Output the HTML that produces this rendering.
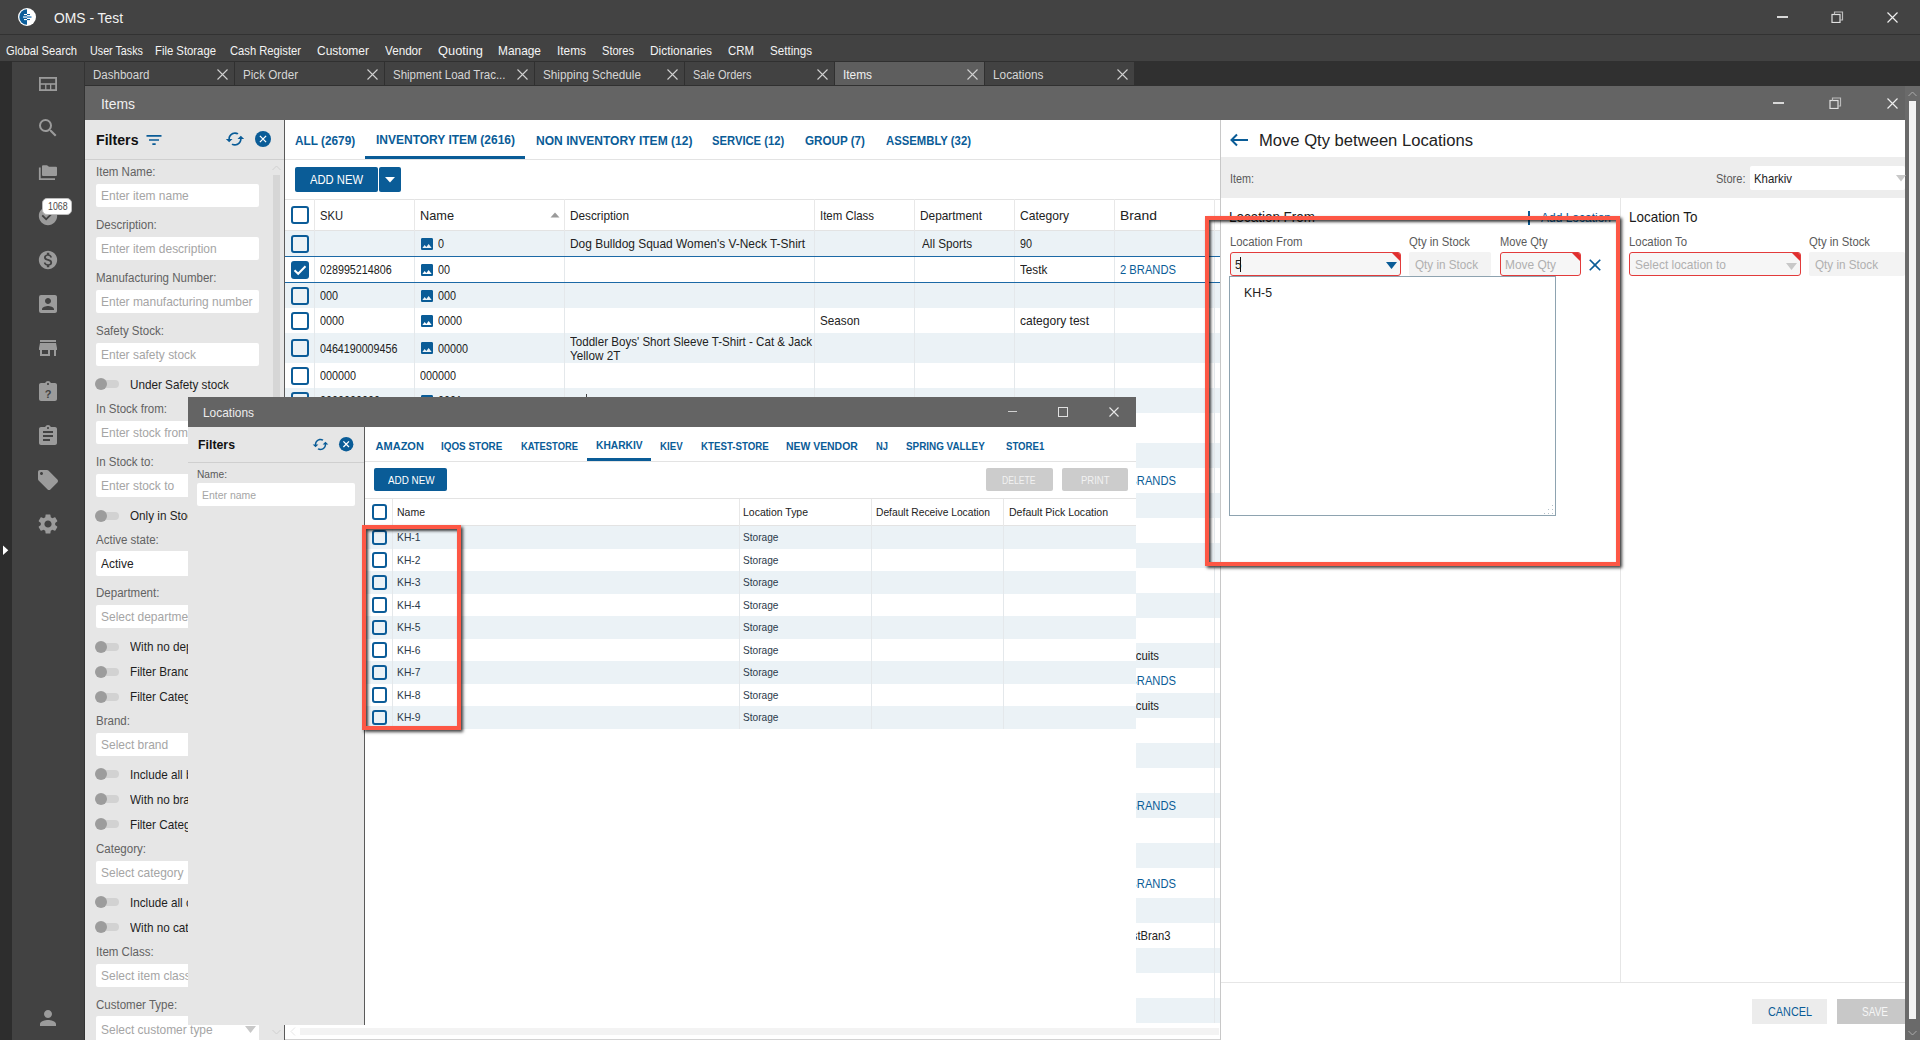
<!DOCTYPE html><html><head><meta charset="utf-8"><style>html,body{margin:0;padding:0;width:1920px;height:1040px;overflow:hidden;background:#303030;font-family:"Liberation Sans",sans-serif}.t{position:absolute;white-space:nowrap;transform-origin:0 0}.r{position:absolute;display:block}</style></head><body>
<div class="r" style="left:0px;top:0px;width:1920px;height:34px;background:#434343;"></div>
<div class="r" style="left:0px;top:34px;width:1920px;height:1px;background:#323232;"></div>
<div class="r" style="left:0px;top:35px;width:1920px;height:26px;background:#424242;"></div>
<svg class="r" style="left:18px;top:8px" width="18" height="18" viewBox="0 0 18 18"><circle cx="9" cy="9" r="9" fill="#fff"/><path d="M9 1.3 A7.7 7.7 0 0 0 9 16.7 Z" fill="#0b5e9b"/><rect x="6" y="6" width="3" height="1.1" fill="#fff"/><rect x="9" y="6" width="3" height="1.1" fill="#0b5e9b"/><rect x="5" y="8.3" width="4" height="1.5" fill="#c5dcee"/><rect x="9" y="8.3" width="4.5" height="1.5" fill="#3a86c2"/><rect x="6" y="11" width="3" height="1.1" fill="#fff"/><rect x="9" y="11" width="3" height="1.1" fill="#0b5e9b"/></svg>
<div class="t" style="left:54.00px;top:10.73px;font-size:14.5px;line-height:14.5px;color:#f2f2f2;transform:scaleX(0.955);">OMS - Test</div>
<div class="r" style="left:1777px;top:16px;width:11px;height:1.5px;background:#d8d8d8;"></div>
<svg class="r" style="left:1831px;top:11px" width="13" height="12" viewBox="0 0 13 12"><rect x="1" y="3.5" width="8" height="8" fill="none" stroke="#e0e0e0" stroke-width="1.2"/><path d="M3.5 3.5V1h8v8H9" fill="none" stroke="#bbb" stroke-width="1.2"/></svg>
<svg class="r" style="left:1887px;top:12px" width="11" height="11" viewBox="0 0 11 11"><path d="M0.5 0.5L10.5 10.5M10.5 0.5L0.5 10.5" stroke="#eee" stroke-width="1.2"/></svg>
<div class="t" style="left:6.00px;top:44.00px;font-size:13px;line-height:13px;color:#f4f4f4;transform:scaleX(0.862);">Global Search</div>
<div class="t" style="left:90.00px;top:44.00px;font-size:13px;line-height:13px;color:#f4f4f4;transform:scaleX(0.827);">User Tasks</div>
<div class="t" style="left:155.00px;top:44.00px;font-size:13px;line-height:13px;color:#f4f4f4;transform:scaleX(0.870);">File Storage</div>
<div class="t" style="left:230.00px;top:44.00px;font-size:13px;line-height:13px;color:#f4f4f4;transform:scaleX(0.862);">Cash Register</div>
<div class="t" style="left:317.00px;top:44.00px;font-size:13px;line-height:13px;color:#f4f4f4;transform:scaleX(0.923);">Customer</div>
<div class="t" style="left:385.00px;top:44.00px;font-size:13px;line-height:13px;color:#f4f4f4;transform:scaleX(0.898);">Vendor</div>
<div class="t" style="left:438.00px;top:44.00px;font-size:13px;line-height:13px;color:#f4f4f4;transform:scaleX(0.988);">Quoting</div>
<div class="t" style="left:498.00px;top:44.00px;font-size:13px;line-height:13px;color:#f4f4f4;transform:scaleX(0.915);">Manage</div>
<div class="t" style="left:557.00px;top:44.00px;font-size:13px;line-height:13px;color:#f4f4f4;transform:scaleX(0.912);">Items</div>
<div class="t" style="left:602.00px;top:44.00px;font-size:13px;line-height:13px;color:#f4f4f4;transform:scaleX(0.852);">Stores</div>
<div class="t" style="left:650.00px;top:44.00px;font-size:13px;line-height:13px;color:#f4f4f4;transform:scaleX(0.913);">Dictionaries</div>
<div class="t" style="left:728.00px;top:44.00px;font-size:13px;line-height:13px;color:#f4f4f4;transform:scaleX(0.878);">CRM</div>
<div class="t" style="left:770.00px;top:44.00px;font-size:13px;line-height:13px;color:#f4f4f4;transform:scaleX(0.894);">Settings</div>
<div class="r" style="left:84px;top:61px;width:1836px;height:25px;background:#303030;"></div>
<div class="r" style="left:85px;top:62px;width:149px;height:23px;background:#424242;"></div>
<div class="t" style="left:93.00px;top:69.12px;font-size:12.5px;line-height:12.5px;color:#d6d6d6;transform:scaleX(0.922);">Dashboard</div>
<svg class="r" style="left:217px;top:69px" width="11" height="11" viewBox="0 0 11 11"><path d="M0.5 0.5L10.5 10.5M10.5 0.5L0.5 10.5" stroke="#d0d0d0" stroke-width="1.1"/></svg>
<div class="r" style="left:235px;top:62px;width:149px;height:23px;background:#424242;"></div>
<div class="t" style="left:243.00px;top:69.12px;font-size:12.5px;line-height:12.5px;color:#d6d6d6;transform:scaleX(0.932);">Pick Order</div>
<svg class="r" style="left:367px;top:69px" width="11" height="11" viewBox="0 0 11 11"><path d="M0.5 0.5L10.5 10.5M10.5 0.5L0.5 10.5" stroke="#d0d0d0" stroke-width="1.1"/></svg>
<div class="r" style="left:385px;top:62px;width:149px;height:23px;background:#424242;"></div>
<div class="t" style="left:393.00px;top:69.12px;font-size:12.5px;line-height:12.5px;color:#d6d6d6;transform:scaleX(0.920);">Shipment Load Trac...</div>
<svg class="r" style="left:517px;top:69px" width="11" height="11" viewBox="0 0 11 11"><path d="M0.5 0.5L10.5 10.5M10.5 0.5L0.5 10.5" stroke="#d0d0d0" stroke-width="1.1"/></svg>
<div class="r" style="left:535px;top:62px;width:149px;height:23px;background:#424242;"></div>
<div class="t" style="left:543.00px;top:69.12px;font-size:12.5px;line-height:12.5px;color:#d6d6d6;transform:scaleX(0.940);">Shipping Schedule</div>
<svg class="r" style="left:667px;top:69px" width="11" height="11" viewBox="0 0 11 11"><path d="M0.5 0.5L10.5 10.5M10.5 0.5L0.5 10.5" stroke="#d0d0d0" stroke-width="1.1"/></svg>
<div class="r" style="left:685px;top:62px;width:149px;height:23px;background:#424242;"></div>
<div class="t" style="left:693.00px;top:69.12px;font-size:12.5px;line-height:12.5px;color:#d6d6d6;transform:scaleX(0.877);">Sale Orders</div>
<svg class="r" style="left:817px;top:69px" width="11" height="11" viewBox="0 0 11 11"><path d="M0.5 0.5L10.5 10.5M10.5 0.5L0.5 10.5" stroke="#d0d0d0" stroke-width="1.1"/></svg>
<div class="r" style="left:835px;top:62px;width:149px;height:23px;background:#5e5e5e;"></div>
<div class="t" style="left:843.00px;top:69.12px;font-size:12.5px;line-height:12.5px;color:#f0f0f0;transform:scaleX(0.949);">Items</div>
<svg class="r" style="left:967px;top:69px" width="11" height="11" viewBox="0 0 11 11"><path d="M0.5 0.5L10.5 10.5M10.5 0.5L0.5 10.5" stroke="#d0d0d0" stroke-width="1.1"/></svg>
<div class="r" style="left:985px;top:62px;width:149px;height:23px;background:#424242;"></div>
<div class="t" style="left:993.00px;top:69.12px;font-size:12.5px;line-height:12.5px;color:#d6d6d6;transform:scaleX(0.944);">Locations</div>
<svg class="r" style="left:1117px;top:69px" width="11" height="11" viewBox="0 0 11 11"><path d="M0.5 0.5L10.5 10.5M10.5 0.5L0.5 10.5" stroke="#d0d0d0" stroke-width="1.1"/></svg>
<div class="r" style="left:0px;top:61px;width:12px;height:979px;background:#2d2d2d;"></div>
<svg class="r" style="left:2px;top:545px" width="7" height="11" viewBox="0 0 7 11"><path d="M1 0.5L6.3 5.2L1 10Z" fill="#fff"/></svg>
<div class="r" style="left:12px;top:62px;width:72px;height:978px;background:#424242;"></div>
<div class="r" style="left:12px;top:61px;width:73px;height:1px;background:#303030;"></div>
<div class="r" style="left:84px;top:61px;width:1px;height:979px;background:#333333;"></div>
<svg class="r" style="left:39px;top:77px" width="18" height="14" viewBox="0 0 18 14"><rect x="0.9" y="0.9" width="16.2" height="12.2" fill="none" stroke="#9b9b9b" stroke-width="1.8"/><rect x="0" y="6.2" width="18" height="1.6" fill="#9b9b9b"/><rect x="6.1" y="7" width="1.3" height="6" fill="#9b9b9b"/><rect x="11" y="7" width="1.3" height="6" fill="#9b9b9b"/></svg>
<svg class="r" style="left:36px;top:116px;" width="24" height="24" viewBox="0 0 24 24"><path fill="#9b9b9b" d="M15.5 14h-.79l-.28-.27A6.471 6.471 0 0 0 16 9.5 6.5 6.5 0 1 0 9.5 16c1.61 0 3.09-.59 4.23-1.57l.27.28v.79l5 4.99L20.49 19l-4.99-5zm-6 0C7.01 14 5 11.99 5 9.5S7.01 5 9.5 5 14 7.01 14 9.5 11.99 14 9.5 14z"/></svg>
<svg class="r" style="left:38px;top:165px" width="20" height="16" viewBox="0 0 20 16"><path d="M5 0.2h4l2 1.6h7a1 1 0 0 1 1 1v7.2a1 1 0 0 1-1 1h-13a1 1 0 0 1-1-1v-8.8a1 1 0 0 1 1-1z" fill="#9b9b9b"/><path d="M1.8 2.5v11.7h15.2" fill="none" stroke="#9b9b9b" stroke-width="1.8"/></svg>
<svg class="r" style="left:37px;top:205px;" width="22" height="22" viewBox="0 0 24 24"><path fill="#9b9b9b" d="M12 2C6.48 2 2 6.48 2 12s4.48 10 10 10 10-4.48 10-10S17.52 2 12 2zm-2 15l-5-5 1.41-1.41L10 14.17l7.59-7.59L19 8l-9 9z"/></svg>
<svg class="r" style="left:37px;top:249px;" width="22" height="22" viewBox="0 0 24 24"><path fill="#9b9b9b" d="M12 2C6.48 2 2 6.48 2 12s4.48 10 10 10 10-4.48 10-10S17.52 2 12 2zm1.41 16.09V20h-2.67v-1.93c-1.71-.36-3.16-1.46-3.27-3.4h1.96c.1 1.05.82 1.870 2.65 1.87 1.96 0 2.4-.98 2.4-1.59 0-.83-.44-1.61-2.670-2.14-2.48-.6-4.18-1.62-4.18-3.67 0-1.72 1.39-2.84 3.11-3.21V4h2.67v1.95c1.86.45 2.79 1.86 2.85 3.39H14.3c-.05-1.11-.64-1.87-2.22-1.87-1.5 0-2.4.68-2.4 1.64 0 .84.65 1.39 2.67 1.91s4.18 1.39 4.18 3.91c-.01 1.83-1.38 2.83-3.12 3.16z"/></svg>
<svg class="r" style="left:36px;top:292px;" width="24" height="24" viewBox="0 0 24 24"><path fill="#9b9b9b" d="M3 5v14a2 2 0 0 0 2 2h14c1.1 0 2-.9 2-2V5c0-1.1-.9-2-2-2H5a2 2 0 0 0-2 2zm12 4c0 1.66-1.34 3-3 3s-3-1.340-3-3 1.34-3 3-3 3 1.34 3 3zm-9 8c0-2 4-3.1 6-3.1s6 1.1 6 3.1v1H6v-1z"/></svg>
<svg class="r" style="left:36px;top:336px;" width="24" height="24" viewBox="0 0 24 24"><path fill="#9b9b9b" d="M20 4H4v2h16V4zm1 10v-2l-1-5H4l-1 5v2h1v6h10v-6h4v6h2v-6h1zm-9 4H6v-4h6v4z"/></svg>
<svg class="r" style="left:36px;top:380px" width="24" height="24" viewBox="0 0 24 24"><path fill="#9b9b9b" d="M19 3h-4.18C14.4 1.84 13.3 1 12 1c-1.3 0-2.4.84-2.82 2H5c-1.1 0-2 .9-2 2v14c0 1.1.9 2 2 2h14c1.1 0 2-.9 2-2V5c0-1.1-.9-2-2-2zm-7 0c.55 0 1 .45 1 1s-.45 1-1 1-1-.45-1-1 .45-1 1-1z"/><text x="12" y="17.5" text-anchor="middle" font-family="Liberation Sans" font-weight="bold" font-size="11" fill="#424242">?</text></svg>
<svg class="r" style="left:36px;top:424px;" width="24" height="24" viewBox="0 0 24 24"><path fill="#9b9b9b" d="M19 3h-4.18C14.4 1.84 13.3 1 12 1c-1.3 0-2.4.84-2.82 2H5c-1.1 0-2 .9-2 2v14c0 1.1.9 2 2 2h14c1.1 0 2-.9 2-2V5c0-1.1-.9-2-2-2zm-7 0c.55 0 1 .45 1 1s-.45 1-1 1-1-.45-1-1 .45-1 1-1zm2 14H7v-2h7v2zm3-4H7v-2h10v2zm0-4H7V7h10v2z"/></svg>
<svg class="r" style="left:36px;top:468px;" width="24" height="24" viewBox="0 0 24 24"><path fill="#9b9b9b" d="M21.41 11.58l-9-9C12.05 2.22 11.550 2 11 2H4c-1.1 0-2 .9-2 2v7c0 .55.22 1.05.59 1.42l9 9c.36.36.86.58 1.41.58.55 0 1.05-.22 1.41-.59l7-7c.37-.36.59-.86.59-1.41 0-.55-.23-1.06-.59-1.42zM5.5 7C4.67 7 4 6.33 4 5.5S4.67 4 5.5 4 7 4.67 7 5.5 6.33 7 5.5 7z"/></svg>
<svg class="r" style="left:36px;top:512px;" width="24" height="24" viewBox="0 0 24 24"><path fill="#9b9b9b" d="M19.14 12.94c.04-.3.06-.61.06-.94 0-.32-.02-.64-.07-.94l2.03-1.58a.49.49 0 0 0 .12-.61l-1.92-3.32a.488.488 0 0 0-.59-.22l-2.39.96c-.5-.38-1.03-.7-1.62-.94l-.36-2.54a.484.484 0 0 0-.48-.41h-3.84c-.24 0-.43.17-.47.41l-.36 2.54c-.59.24-1.13.57-1.62.94l-2.39-.96c-.22-.08-.47 0-.59.22L2.74 8.87c-.12.21-.08.47.12.61l2.03 1.58c-.05.3-.09.63-.09.94s.02.64.07.94l-2.03 1.58a.49.49 0 0 0-.12.61l1.92 3.32c.12.22.37.29.59.22l2.39-.96c.5.38 1.030.7 1.62.94l.36 2.54c.05.24.24.41.48.41h3.84c.24 0 .44-.17.47-.41l.36-2.54c.59-.24 1.13-.56 1.62-.94l2.39.96c.22.08.47 0 .59-.22l1.92-3.32c.12-.22.07-.47-.12-.61l-2.01-1.58zM12 15.6c-1.98 0-3.6-1.62-3.6-3.6s1.62-3.6 3.6-3.6 3.6 1.62 3.6 3.6-1.62 3.6-3.6 3.6z"/></svg>
<svg class="r" style="left:36px;top:1006px;" width="24" height="24" viewBox="0 0 24 24"><path fill="#9b9b9b" d="M12 12c2.21 0 4-1.79 4-4s-1.79-4-4-4-4 1.79-4 4 1.79 4 4 4zm0 2c-2.67 0-8 1.34-8 4v2h16v-2c0-2.66-5.33-4-8-4z"/></svg>
<div class="r" style="left:42px;top:198px;width:28px;height:15px;background:#fff;border:1px solid #bbb;border-radius:5px"></div>
<div class="t" style="left:47.50px;top:201.53px;font-size:10px;line-height:10px;color:#4a4a4a;transform:scaleX(0.877);">1068</div>
<div class="r" style="left:85px;top:86px;width:1820px;height:34px;background:#646464;"></div>
<div class="t" style="left:101.00px;top:96.65px;font-size:14px;line-height:14px;color:#f0f0f0;transform:scaleX(0.993);">Items</div>
<div class="r" style="left:1773px;top:102px;width:11px;height:1.5px;background:#d8d8d8;"></div>
<svg class="r" style="left:1829px;top:97px" width="13" height="12" viewBox="0 0 13 12"><rect x="1" y="3.5" width="8" height="8" fill="none" stroke="#e0e0e0" stroke-width="1.2"/><path d="M3.5 3.5V1h8v8H9" fill="none" stroke="#bbb" stroke-width="1.2"/></svg>
<svg class="r" style="left:1887px;top:98px" width="11" height="11" viewBox="0 0 11 11"><path d="M0.5 0.5L10.5 10.5M10.5 0.5L0.5 10.5" stroke="#eee" stroke-width="1.2"/></svg>
<div class="r" style="left:1905px;top:86px;width:15px;height:954px;background:#6a6a6a;"></div>
<div class="r" style="left:1909px;top:101px;width:7px;height:918px;background:#f3f3f3;"></div>
<svg class="r" style="left:1908px;top:91px" width="9" height="6" viewBox="0 0 9 6"><path d="M0.5 5L4.5 1L8.5 5" fill="none" stroke="#aaa" stroke-width="1"/></svg>
<svg class="r" style="left:1908px;top:1030px" width="9" height="6" viewBox="0 0 9 6"><path d="M0.5 1L4.5 5L8.5 1" fill="none" stroke="#aaa" stroke-width="1"/></svg>
<div class="r" style="left:85px;top:120px;width:199px;height:920px;background:#e6e6e6;"></div>
<div class="r" style="left:284px;top:120px;width:1px;height:920px;background:#5a5a5a;"></div>
<div class="t" style="left:95.50px;top:131.88px;font-size:15.5px;line-height:15.5px;color:#111;font-weight:bold;transform:scaleX(0.914);">Filters</div>
<svg class="r" style="left:144px;top:129.5px;" width="20" height="20" viewBox="0 0 24 24"><path fill="#0a5c97" d="M10 18h4v-2h-4v2zM3 6v2h18V6H3zm3 7h12v-2H6v2z"/></svg>
<svg class="r" style="left:225px;top:129px;transform:rotate(90deg)" width="20" height="20" viewBox="0 0 24 24"><path fill="#0a5c97" d="M12 4V1L8 5l4 4V6c3.31 0 6 2.69 6 6 0 1.01-.25 1.97-.7 2.8l1.46 1.46A7.93 7.93 0 0 0 20 12c0-4.42-3.58-8-8-8zm0 14c-3.31 0-6-2.69-6-6 0-1.01.25-1.97.7-2.8L5.24 7.74A7.93 7.93 0 0 0 4 12c0 4.42 3.58 8 8 8v3l4-4-4-4v3z"/></svg>
<svg class="r" style="left:254.00px;top:130.00px" width="18" height="18" viewBox="0 0 18 18"><circle cx="9" cy="9" r="8" fill="#0a5c97"/><path d="M5.9 5.9L12.1 12.1M12.1 5.9L5.9 12.1" stroke="#fff" stroke-width="1.3"/></svg>
<div class="r" style="left:85px;top:159px;width:199px;height:1px;background:#cfcfcf;"></div>
<div class="r" style="left:273px;top:175px;width:7px;height:845px;background:#d6d6d6;"></div>
<svg class="r" style="left:272px;top:1029px" width="9" height="6" viewBox="0 0 9 6"><path d="M0.5 1L4.5 5L8.5 1" fill="none" stroke="#d0d0d0" stroke-width="1"/></svg>
<svg class="r" style="left:272px;top:165px" width="9" height="6" viewBox="0 0 9 6"><path d="M0.5 5L4.5 1L8.5 5" fill="none" stroke="#d0d0d0" stroke-width="1"/></svg>
<div class="t" style="left:95.50px;top:165.84px;font-size:12px;line-height:12px;color:#626262;transform:scaleX(0.960);">Item Name:</div>
<div class="r" style="left:95.5px;top:184px;width:163px;height:23px;background:#fff;border-radius:2px"></div>
<div class="t" style="left:100.50px;top:189.00px;font-size:13px;line-height:13px;color:#a5a5a5;transform:scaleX(0.920);">Enter item name</div>
<div class="t" style="left:95.50px;top:218.84px;font-size:12px;line-height:12px;color:#626262;transform:scaleX(0.960);">Description:</div>
<div class="r" style="left:95.5px;top:237px;width:163px;height:23px;background:#fff;border-radius:2px"></div>
<div class="t" style="left:100.50px;top:242.00px;font-size:13px;line-height:13px;color:#a5a5a5;transform:scaleX(0.920);">Enter item description</div>
<div class="t" style="left:95.50px;top:271.84px;font-size:12px;line-height:12px;color:#626262;transform:scaleX(0.960);">Manufacturing Number:</div>
<div class="r" style="left:95.5px;top:290px;width:163px;height:23px;background:#fff;border-radius:2px"></div>
<div class="t" style="left:100.50px;top:295.00px;font-size:13px;line-height:13px;color:#a5a5a5;transform:scaleX(0.920);">Enter manufacturing number</div>
<div class="t" style="left:95.50px;top:324.84px;font-size:12px;line-height:12px;color:#626262;transform:scaleX(0.960);">Safety Stock:</div>
<div class="r" style="left:95.5px;top:343px;width:163px;height:23px;background:#fff;border-radius:2px"></div>
<div class="t" style="left:100.50px;top:348.00px;font-size:13px;line-height:13px;color:#a5a5a5;transform:scaleX(0.920);">Enter safety stock</div>
<div class="r" style="left:100px;top:380px;width:19px;height:8px;background:#d2d2d2;border-radius:4px"></div>
<div class="r" style="left:95px;top:378px;width:12px;height:12px;background:#9c9c9c;border-radius:6px"></div>
<div class="t" style="left:129.50px;top:378.00px;font-size:13px;line-height:13px;color:#1e1e1e;transform:scaleX(0.900);">Under Safety stock</div>
<div class="t" style="left:95.50px;top:402.84px;font-size:12px;line-height:12px;color:#626262;transform:scaleX(0.960);">In Stock from:</div>
<div class="r" style="left:95.5px;top:421px;width:163px;height:23px;background:#fff;border-radius:2px"></div>
<div class="t" style="left:100.50px;top:426.00px;font-size:13px;line-height:13px;color:#a5a5a5;transform:scaleX(0.920);">Enter stock from</div>
<div class="t" style="left:95.50px;top:455.84px;font-size:12px;line-height:12px;color:#626262;transform:scaleX(0.960);">In Stock to:</div>
<div class="r" style="left:95.5px;top:474px;width:163px;height:23px;background:#fff;border-radius:2px"></div>
<div class="t" style="left:100.50px;top:479.00px;font-size:13px;line-height:13px;color:#a5a5a5;transform:scaleX(0.920);">Enter stock to</div>
<div class="r" style="left:100px;top:511.5px;width:19px;height:8px;background:#d2d2d2;border-radius:4px"></div>
<div class="r" style="left:95px;top:509.5px;width:12px;height:12px;background:#9c9c9c;border-radius:6px"></div>
<div class="t" style="left:129.50px;top:509.00px;font-size:13px;line-height:13px;color:#1e1e1e;transform:scaleX(0.900);">Only in Stock</div>
<div class="t" style="left:95.50px;top:533.84px;font-size:12px;line-height:12px;color:#626262;transform:scaleX(0.960);">Active state:</div>
<div class="r" style="left:95.5px;top:551px;width:163px;height:25px;background:#fff;border-radius:2px"></div>
<div class="t" style="left:100.50px;top:557.00px;font-size:13px;line-height:13px;color:#222;transform:scaleX(0.920);">Active</div>
<div class="t" style="left:95.50px;top:586.84px;font-size:12px;line-height:12px;color:#626262;transform:scaleX(0.960);">Department:</div>
<div class="r" style="left:95.5px;top:605px;width:163px;height:23px;background:#fff;border-radius:2px"></div>
<div class="t" style="left:100.50px;top:610.00px;font-size:13px;line-height:13px;color:#a5a5a5;transform:scaleX(0.920);">Select department</div>
<div class="r" style="left:100px;top:642.5px;width:19px;height:8px;background:#d2d2d2;border-radius:4px"></div>
<div class="r" style="left:95px;top:640.5px;width:12px;height:12px;background:#9c9c9c;border-radius:6px"></div>
<div class="t" style="left:129.50px;top:640.00px;font-size:13px;line-height:13px;color:#1e1e1e;transform:scaleX(0.900);">With no department</div>
<div class="r" style="left:100px;top:667.5px;width:19px;height:8px;background:#d2d2d2;border-radius:4px"></div>
<div class="r" style="left:95px;top:665.5px;width:12px;height:12px;background:#9c9c9c;border-radius:6px"></div>
<div class="t" style="left:129.50px;top:665.00px;font-size:13px;line-height:13px;color:#1e1e1e;transform:scaleX(0.900);">Filter Brand</div>
<div class="r" style="left:100px;top:692.5px;width:19px;height:8px;background:#d2d2d2;border-radius:4px"></div>
<div class="r" style="left:95px;top:690.5px;width:12px;height:12px;background:#9c9c9c;border-radius:6px"></div>
<div class="t" style="left:129.50px;top:690.00px;font-size:13px;line-height:13px;color:#1e1e1e;transform:scaleX(0.900);">Filter Category</div>
<div class="t" style="left:95.50px;top:714.84px;font-size:12px;line-height:12px;color:#626262;transform:scaleX(0.960);">Brand:</div>
<div class="r" style="left:95.5px;top:733px;width:163px;height:23px;background:#fff;border-radius:2px"></div>
<div class="t" style="left:100.50px;top:738.00px;font-size:13px;line-height:13px;color:#a5a5a5;transform:scaleX(0.920);">Select brand</div>
<div class="r" style="left:100px;top:770px;width:19px;height:8px;background:#d2d2d2;border-radius:4px"></div>
<div class="r" style="left:95px;top:768px;width:12px;height:12px;background:#9c9c9c;border-radius:6px"></div>
<div class="t" style="left:129.50px;top:768.00px;font-size:13px;line-height:13px;color:#1e1e1e;transform:scaleX(0.900);">Include all brands</div>
<div class="r" style="left:100px;top:795px;width:19px;height:8px;background:#d2d2d2;border-radius:4px"></div>
<div class="r" style="left:95px;top:793px;width:12px;height:12px;background:#9c9c9c;border-radius:6px"></div>
<div class="t" style="left:129.50px;top:793.00px;font-size:13px;line-height:13px;color:#1e1e1e;transform:scaleX(0.900);">With no brand</div>
<div class="r" style="left:100px;top:820px;width:19px;height:8px;background:#d2d2d2;border-radius:4px"></div>
<div class="r" style="left:95px;top:818px;width:12px;height:12px;background:#9c9c9c;border-radius:6px"></div>
<div class="t" style="left:129.50px;top:818.00px;font-size:13px;line-height:13px;color:#1e1e1e;transform:scaleX(0.900);">Filter Category</div>
<div class="t" style="left:95.50px;top:842.84px;font-size:12px;line-height:12px;color:#626262;transform:scaleX(0.960);">Category:</div>
<div class="r" style="left:95.5px;top:861px;width:163px;height:23px;background:#fff;border-radius:2px"></div>
<div class="t" style="left:100.50px;top:866.00px;font-size:13px;line-height:13px;color:#a5a5a5;transform:scaleX(0.920);">Select category</div>
<div class="r" style="left:100px;top:898px;width:19px;height:8px;background:#d2d2d2;border-radius:4px"></div>
<div class="r" style="left:95px;top:896px;width:12px;height:12px;background:#9c9c9c;border-radius:6px"></div>
<div class="t" style="left:129.50px;top:896.00px;font-size:13px;line-height:13px;color:#1e1e1e;transform:scaleX(0.900);">Include all categories</div>
<div class="r" style="left:100px;top:923px;width:19px;height:8px;background:#d2d2d2;border-radius:4px"></div>
<div class="r" style="left:95px;top:921px;width:12px;height:12px;background:#9c9c9c;border-radius:6px"></div>
<div class="t" style="left:129.50px;top:921.00px;font-size:13px;line-height:13px;color:#1e1e1e;transform:scaleX(0.900);">With no category</div>
<div class="t" style="left:95.50px;top:945.84px;font-size:12px;line-height:12px;color:#626262;transform:scaleX(0.960);">Item Class:</div>
<div class="r" style="left:95.5px;top:964px;width:163px;height:23px;background:#fff;border-radius:2px"></div>
<div class="t" style="left:100.50px;top:969.00px;font-size:13px;line-height:13px;color:#a5a5a5;transform:scaleX(0.920);">Select item class</div>
<div class="t" style="left:95.50px;top:998.84px;font-size:12px;line-height:12px;color:#626262;transform:scaleX(0.960);">Customer Type:</div>
<div class="r" style="left:95.5px;top:1016px;width:163px;height:26px;background:#fff;border-radius:2px"></div>
<div class="t" style="left:100.50px;top:1022.50px;font-size:13px;line-height:13px;color:#a5a5a5;transform:scaleX(0.920);">Select customer type</div>
<svg class="r" style="left:245px;top:1026px" width="11" height="8" viewBox="0 0 11 8"><path d="M0 0H11L5.5 7Z" fill="#c8c8c8"/></svg>
<div class="r" style="left:285px;top:120px;width:935px;height:920px;background:#fff;"></div>
<div class="t" style="left:294.80px;top:134.00px;font-size:13px;line-height:13px;color:#0a5c97;font-weight:bold;transform:scaleX(0.909);">ALL (2679)</div>
<div class="t" style="left:375.60px;top:133.00px;font-size:13px;line-height:13px;color:#0a5c97;font-weight:bold;transform:scaleX(0.922);">INVENTORY ITEM (2616)</div>
<div class="t" style="left:535.50px;top:134.00px;font-size:13px;line-height:13px;color:#0a5c97;font-weight:bold;transform:scaleX(0.927);">NON INVENTORY ITEM (12)</div>
<div class="t" style="left:712.30px;top:134.00px;font-size:13px;line-height:13px;color:#0a5c97;font-weight:bold;transform:scaleX(0.864);">SERVICE (12)</div>
<div class="t" style="left:804.80px;top:134.00px;font-size:13px;line-height:13px;color:#0a5c97;font-weight:bold;transform:scaleX(0.896);">GROUP (7)</div>
<div class="t" style="left:885.50px;top:134.00px;font-size:13px;line-height:13px;color:#0a5c97;font-weight:bold;transform:scaleX(0.871);">ASSEMBLY (32)</div>
<div class="r" style="left:285px;top:159px;width:935px;height:1px;background:#e3e3e3;"></div>
<div class="r" style="left:365px;top:156px;width:160px;height:3px;background:#0a5c97;"></div>
<div class="r" style="left:295px;top:167px;width:83px;height:25px;background:#0a5c97;border-radius:2px"></div>
<div class="t" style="left:310.00px;top:174.22px;font-size:12.5px;line-height:12.5px;color:#fff;transform:scaleX(0.898);">ADD NEW</div>
<div class="r" style="left:379px;top:167px;width:22px;height:25px;background:#0a5c97;border-radius:2px"></div>
<svg class="r" style="left:385px;top:177px" width="10" height="6" viewBox="0 0 10 6"><path d="M0 0H10L5 5.5Z" fill="#fff"/></svg>
<div class="r" style="left:285px;top:199px;width:935px;height:1px;background:#e3e3e3;"></div>
<div class="r" style="left:285px;top:230px;width:935px;height:1px;background:#e3e3e3;"></div>
<div class="r" style="left:291px;top:206px;width:18px;height:18px;border:2px solid #0b5c98;border-radius:3px;box-sizing:border-box"></div>
<div class="r" style="left:314px;top:199px;width:1px;height:826px;background:#e8e8e8;"></div>
<div class="r" style="left:414px;top:199px;width:1px;height:826px;background:#e8e8e8;"></div>
<div class="r" style="left:564px;top:199px;width:1px;height:826px;background:#e8e8e8;"></div>
<div class="r" style="left:814px;top:199px;width:1px;height:826px;background:#e8e8e8;"></div>
<div class="r" style="left:914px;top:199px;width:1px;height:826px;background:#e8e8e8;"></div>
<div class="r" style="left:1014px;top:199px;width:1px;height:826px;background:#e8e8e8;"></div>
<div class="r" style="left:1114px;top:199px;width:1px;height:826px;background:#e8e8e8;"></div>
<div class="r" style="left:1214px;top:199px;width:1px;height:826px;background:#e8e8e8;"></div>
<div class="t" style="left:320.00px;top:209.00px;font-size:13px;line-height:13px;color:#222;transform:scaleX(0.860);">SKU</div>
<div class="t" style="left:420.00px;top:209.00px;font-size:13px;line-height:13px;color:#222;transform:scaleX(0.980);">Name</div>
<div class="t" style="left:570.00px;top:209.00px;font-size:13px;line-height:13px;color:#222;transform:scaleX(0.907);">Description</div>
<div class="t" style="left:820.00px;top:209.00px;font-size:13px;line-height:13px;color:#222;transform:scaleX(0.879);">Item Class</div>
<div class="t" style="left:920.00px;top:209.00px;font-size:13px;line-height:13px;color:#222;transform:scaleX(0.913);">Department</div>
<div class="t" style="left:1020.00px;top:209.00px;font-size:13px;line-height:13px;color:#222;transform:scaleX(0.929);">Category</div>
<div class="t" style="left:1120.00px;top:209.00px;font-size:13px;line-height:13px;color:#222;transform:scaleX(1.067);">Brand</div>
<svg class="r" style="left:550px;top:212px" width="10" height="6" viewBox="0 0 10 6"><path d="M0.5 5.5H9.5L5 0.5Z" fill="#9a9a9a"/></svg>
<div class="r" style="left:285px;top:231px;width:929px;height:25px;background:#ebf2f6;"></div>
<div class="r" style="left:1215px;top:231px;width:5px;height:25px;background:#ebf2f6;"></div>
<div class="r" style="left:285px;top:283px;width:929px;height:25px;background:#ebf2f6;"></div>
<div class="r" style="left:1215px;top:283px;width:5px;height:25px;background:#ebf2f6;"></div>
<div class="r" style="left:285px;top:333px;width:929px;height:30px;background:#ebf2f6;"></div>
<div class="r" style="left:1215px;top:333px;width:5px;height:30px;background:#ebf2f6;"></div>
<div class="r" style="left:285px;top:388px;width:929px;height:25px;background:#ebf2f6;"></div>
<div class="r" style="left:1215px;top:388px;width:5px;height:25px;background:#ebf2f6;"></div>
<div class="r" style="left:285px;top:443px;width:929px;height:25px;background:#ebf2f6;"></div>
<div class="r" style="left:1215px;top:443px;width:5px;height:25px;background:#ebf2f6;"></div>
<div class="r" style="left:285px;top:493px;width:929px;height:25px;background:#ebf2f6;"></div>
<div class="r" style="left:1215px;top:493px;width:5px;height:25px;background:#ebf2f6;"></div>
<div class="r" style="left:285px;top:543px;width:929px;height:25px;background:#ebf2f6;"></div>
<div class="r" style="left:1215px;top:543px;width:5px;height:25px;background:#ebf2f6;"></div>
<div class="r" style="left:285px;top:593px;width:929px;height:25px;background:#ebf2f6;"></div>
<div class="r" style="left:1215px;top:593px;width:5px;height:25px;background:#ebf2f6;"></div>
<div class="r" style="left:285px;top:643px;width:929px;height:25px;background:#ebf2f6;"></div>
<div class="r" style="left:1215px;top:643px;width:5px;height:25px;background:#ebf2f6;"></div>
<div class="r" style="left:285px;top:693px;width:929px;height:25px;background:#ebf2f6;"></div>
<div class="r" style="left:1215px;top:693px;width:5px;height:25px;background:#ebf2f6;"></div>
<div class="r" style="left:285px;top:743px;width:929px;height:25px;background:#ebf2f6;"></div>
<div class="r" style="left:1215px;top:743px;width:5px;height:25px;background:#ebf2f6;"></div>
<div class="r" style="left:285px;top:793px;width:929px;height:25px;background:#ebf2f6;"></div>
<div class="r" style="left:1215px;top:793px;width:5px;height:25px;background:#ebf2f6;"></div>
<div class="r" style="left:285px;top:843px;width:929px;height:25px;background:#ebf2f6;"></div>
<div class="r" style="left:1215px;top:843px;width:5px;height:25px;background:#ebf2f6;"></div>
<div class="r" style="left:285px;top:898px;width:929px;height:25px;background:#ebf2f6;"></div>
<div class="r" style="left:1215px;top:898px;width:5px;height:25px;background:#ebf2f6;"></div>
<div class="r" style="left:285px;top:948px;width:929px;height:25px;background:#ebf2f6;"></div>
<div class="r" style="left:1215px;top:948px;width:5px;height:25px;background:#ebf2f6;"></div>
<div class="r" style="left:285px;top:998px;width:929px;height:25px;background:#ebf2f6;"></div>
<div class="r" style="left:1215px;top:998px;width:5px;height:25px;background:#ebf2f6;"></div>
<div class="r" style="left:314px;top:231px;width:1px;height:792px;background:#e4e8eb;"></div>
<div class="r" style="left:414px;top:231px;width:1px;height:792px;background:#e4e8eb;"></div>
<div class="r" style="left:564px;top:231px;width:1px;height:792px;background:#e4e8eb;"></div>
<div class="r" style="left:814px;top:231px;width:1px;height:792px;background:#e4e8eb;"></div>
<div class="r" style="left:914px;top:231px;width:1px;height:792px;background:#e4e8eb;"></div>
<div class="r" style="left:1014px;top:231px;width:1px;height:792px;background:#e4e8eb;"></div>
<div class="r" style="left:1114px;top:231px;width:1px;height:792px;background:#e4e8eb;"></div>
<div class="r" style="left:1214px;top:231px;width:1px;height:792px;background:#e4e8eb;"></div>
<div class="r" style="left:285px;top:256px;width:935px;height:1px;background:#1b69a6;"></div>
<div class="r" style="left:285px;top:282px;width:935px;height:1px;background:#1b69a6;"></div>
<div class="r" style="left:291px;top:234.5px;width:18px;height:18px;border:2px solid #0b5c98;border-radius:3px;box-sizing:border-box"></div>
<svg class="r" style="left:291px;top:260.5px" width="18" height="18" viewBox="0 0 18 18"><rect x="0" y="0" width="18" height="18" rx="3" fill="#0b5c98"/><path d="M3.5 9.2L7.2 12.8L14.5 5.3" fill="none" stroke="#fff" stroke-width="2"/></svg>
<div class="r" style="left:291px;top:286.5px;width:18px;height:18px;border:2px solid #0b5c98;border-radius:3px;box-sizing:border-box"></div>
<div class="r" style="left:291px;top:311.5px;width:18px;height:18px;border:2px solid #0b5c98;border-radius:3px;box-sizing:border-box"></div>
<div class="r" style="left:291px;top:339.0px;width:18px;height:18px;border:2px solid #0b5c98;border-radius:3px;box-sizing:border-box"></div>
<div class="r" style="left:291px;top:366.5px;width:18px;height:18px;border:2px solid #0b5c98;border-radius:3px;box-sizing:border-box"></div>
<div class="r" style="left:291px;top:391.5px;width:18px;height:18px;border:2px solid #0b5c98;border-radius:3px;box-sizing:border-box"></div>
<svg class="r" style="left:419px;top:235.5px;" width="16" height="16" viewBox="0 0 24 24"><path fill="#0a5c97" d="M21 19V5c0-1.1-.9-2-2-2H5c-1.1 0-2 .9-2 2v14c0 1.1.9 2 2 2h14c1.1 0 2-.9 2-2zM8.5 13.5l2.5 3.01L14.5 12l4.5 6H5l3.5-4.5z"/></svg>
<div class="t" style="left:438.00px;top:237.00px;font-size:13px;line-height:13px;color:#222;transform:scaleX(0.830);">0</div>
<div class="t" style="left:570.00px;top:237.00px;font-size:13px;line-height:13px;color:#222;transform:scaleX(0.917);">Dog Bulldog Squad Women&#x27;s V-Neck T-Shirt</div>
<div class="t" style="left:922.00px;top:237.00px;font-size:13px;line-height:13px;color:#222;transform:scaleX(0.900);">All Sports</div>
<div class="t" style="left:1020.00px;top:237.00px;font-size:13px;line-height:13px;color:#222;transform:scaleX(0.830);">90</div>
<div class="t" style="left:320.00px;top:263.00px;font-size:13px;line-height:13px;color:#222;transform:scaleX(0.826);">028995214806</div>
<svg class="r" style="left:419px;top:261.5px;" width="16" height="16" viewBox="0 0 24 24"><path fill="#0a5c97" d="M21 19V5c0-1.1-.9-2-2-2H5c-1.1 0-2 .9-2 2v14c0 1.1.9 2 2 2h14c1.1 0 2-.9 2-2zM8.5 13.5l2.5 3.01L14.5 12l4.5 6H5l3.5-4.5z"/></svg>
<div class="t" style="left:438.00px;top:263.00px;font-size:13px;line-height:13px;color:#222;transform:scaleX(0.830);">00</div>
<div class="t" style="left:1020.00px;top:263.00px;font-size:13px;line-height:13px;color:#222;transform:scaleX(0.900);">Testk</div>
<div class="t" style="left:1120.00px;top:263.00px;font-size:13px;line-height:13px;color:#0a5c97;transform:scaleX(0.861);">2 BRANDS</div>
<div class="t" style="left:320.00px;top:289.00px;font-size:13px;line-height:13px;color:#222;transform:scaleX(0.830);">000</div>
<svg class="r" style="left:419px;top:287.5px;" width="16" height="16" viewBox="0 0 24 24"><path fill="#0a5c97" d="M21 19V5c0-1.1-.9-2-2-2H5c-1.1 0-2 .9-2 2v14c0 1.1.9 2 2 2h14c1.1 0 2-.9 2-2zM8.5 13.5l2.5 3.01L14.5 12l4.5 6H5l3.5-4.5z"/></svg>
<div class="t" style="left:438.00px;top:289.00px;font-size:13px;line-height:13px;color:#222;transform:scaleX(0.830);">000</div>
<div class="t" style="left:320.00px;top:314.00px;font-size:13px;line-height:13px;color:#222;transform:scaleX(0.830);">0000</div>
<svg class="r" style="left:419px;top:312.5px;" width="16" height="16" viewBox="0 0 24 24"><path fill="#0a5c97" d="M21 19V5c0-1.1-.9-2-2-2H5c-1.1 0-2 .9-2 2v14c0 1.1.9 2 2 2h14c1.1 0 2-.9 2-2zM8.5 13.5l2.5 3.01L14.5 12l4.5 6H5l3.5-4.5z"/></svg>
<div class="t" style="left:438.00px;top:314.00px;font-size:13px;line-height:13px;color:#222;transform:scaleX(0.830);">0000</div>
<div class="t" style="left:820.00px;top:314.00px;font-size:13px;line-height:13px;color:#222;transform:scaleX(0.900);">Season</div>
<div class="t" style="left:1020.00px;top:314.00px;font-size:13px;line-height:13px;color:#222;transform:scaleX(0.927);">category test</div>
<div class="t" style="left:320.00px;top:341.50px;font-size:13px;line-height:13px;color:#222;transform:scaleX(0.823);">0464190009456</div>
<svg class="r" style="left:419px;top:340px;" width="16" height="16" viewBox="0 0 24 24"><path fill="#0a5c97" d="M21 19V5c0-1.1-.9-2-2-2H5c-1.1 0-2 .9-2 2v14c0 1.1.9 2 2 2h14c1.1 0 2-.9 2-2zM8.5 13.5l2.5 3.01L14.5 12l4.5 6H5l3.5-4.5z"/></svg>
<div class="t" style="left:438.00px;top:341.50px;font-size:13px;line-height:13px;color:#222;transform:scaleX(0.830);">00000</div>
<div class="t" style="left:570.00px;top:334.50px;font-size:13px;line-height:13px;color:#222;transform:scaleX(0.891);">Toddler Boys&#x27; Short Sleeve T-Shirt - Cat &amp; Jack</div>
<div class="t" style="left:570.00px;top:348.50px;font-size:13px;line-height:13px;color:#222;transform:scaleX(0.900);">Yellow 2T</div>
<div class="t" style="left:320.00px;top:369.00px;font-size:13px;line-height:13px;color:#222;transform:scaleX(0.830);">000000</div>
<div class="t" style="left:420.00px;top:369.00px;font-size:13px;line-height:13px;color:#222;transform:scaleX(0.830);">000000</div>
<div class="t" style="left:320.00px;top:394.00px;font-size:13px;line-height:13px;color:#222;transform:scaleX(0.830);">0000000000</div>
<svg class="r" style="left:419px;top:392.5px;" width="16" height="16" viewBox="0 0 24 24"><path fill="#0a5c97" d="M21 19V5c0-1.1-.9-2-2-2H5c-1.1 0-2 .9-2 2v14c0 1.1.9 2 2 2h14c1.1 0 2-.9 2-2zM8.5 13.5l2.5 3.01L14.5 12l4.5 6H5l3.5-4.5z"/></svg>
<div class="t" style="left:438.00px;top:394.00px;font-size:13px;line-height:13px;color:#222;transform:scaleX(0.830);">0001</div>
<div class="r" style="left:586px;top:394px;width:1px;height:3px;background:#444;"></div>
<div class="t" style="left:1120.00px;top:474.00px;font-size:13px;line-height:13px;color:#0a5c97;transform:scaleX(0.861);">2 BRANDS</div>
<div class="t" style="left:1120.00px;top:649.00px;font-size:13px;line-height:13px;color:#222;transform:scaleX(0.871);">Biscuits</div>
<div class="t" style="left:1120.00px;top:674.00px;font-size:13px;line-height:13px;color:#0a5c97;transform:scaleX(0.861);">2 BRANDS</div>
<div class="t" style="left:1120.00px;top:699.00px;font-size:13px;line-height:13px;color:#222;transform:scaleX(0.871);">Biscuits</div>
<div class="t" style="left:1120.00px;top:799.00px;font-size:13px;line-height:13px;color:#0a5c97;transform:scaleX(0.861);">2 BRANDS</div>
<div class="t" style="left:1120.00px;top:876.50px;font-size:13px;line-height:13px;color:#0a5c97;transform:scaleX(0.861);">2 BRANDS</div>
<div class="t" style="left:1120.00px;top:929.00px;font-size:13px;line-height:13px;color:#222;transform:scaleX(0.863);">TestBran3</div>
<div class="r" style="left:285px;top:1023px;width:935px;height:17px;background:#fff;"></div>
<div class="r" style="left:300px;top:1028px;width:919px;height:7px;background:#f3f3f3;"></div>
<div class="r" style="left:285px;top:1039px;width:935px;height:1px;background:#d2d2d2;"></div>
<svg class="r" style="left:290px;top:1027px" width="6" height="9" viewBox="0 0 6 9"><path d="M5 0.5L1 4.5L5 8.5" fill="none" stroke="#e6e6e6" stroke-width="1"/></svg>
<div class="r" style="left:1220px;top:120px;width:685px;height:920px;background:#fff;"></div>
<div class="r" style="left:1220px;top:120px;width:1px;height:920px;background:#c8c8c8;"></div>
<svg class="r" style="left:1230px;top:133px" width="19" height="14" viewBox="0 0 19 14"><path d="M1.5 7H18M7 1.5L1.5 7L7 12.5" fill="none" stroke="#0a5c97" stroke-width="2"/></svg>
<div class="t" style="left:1259.00px;top:133.46px;font-size:16px;line-height:16px;color:#222;transform:scaleX(1.037);">Move Qty between Locations</div>
<div class="r" style="left:1221px;top:157px;width:684px;height:41px;background:#ededed;"></div>
<div class="t" style="left:1229.50px;top:172.84px;font-size:12px;line-height:12px;color:#5a5a5a;transform:scaleX(0.900);">Item:</div>
<div class="t" style="left:1716.00px;top:172.84px;font-size:12px;line-height:12px;color:#5a5a5a;transform:scaleX(0.921);">Store:</div>
<div class="r" style="left:1750px;top:166px;width:155px;height:24px;background:#fff;border-radius:2px"></div>
<div class="t" style="left:1754.00px;top:172.00px;font-size:13px;line-height:13px;color:#222;transform:scaleX(0.877);">Kharkiv</div>
<svg class="r" style="left:1896px;top:175px" width="10" height="7" viewBox="0 0 10 7"><path d="M0 0H10L5 6.5Z" fill="#c8c8c8"/></svg>
<div class="r" style="left:1620px;top:198px;width:1px;height:784px;background:#e6e6e6;"></div>
<div class="r" style="left:1221px;top:982px;width:684px;height:1px;background:#e6e6e6;"></div>
<div class="t" style="left:1229.00px;top:210.23px;font-size:14.5px;line-height:14.5px;color:#1a1a1a;transform:scaleX(0.928);">Location From</div>
<div class="r" style="left:1528px;top:211px;width:2px;height:14px;background:#0a5c97;"></div>
<div class="t" style="left:1541.00px;top:211.00px;font-size:13px;line-height:13px;color:#0a5c97;transform:scaleX(0.922);">Add Location</div>
<div class="t" style="left:1629.00px;top:210.23px;font-size:14.5px;line-height:14.5px;color:#1a1a1a;transform:scaleX(0.927);">Location To</div>
<div class="t" style="left:1229.50px;top:235.84px;font-size:12px;line-height:12px;color:#5a5a5a;transform:scaleX(0.945);">Location From</div>
<div class="t" style="left:1409.00px;top:235.84px;font-size:12px;line-height:12px;color:#5a5a5a;transform:scaleX(0.943);">Qty in Stock</div>
<div class="t" style="left:1499.50px;top:235.84px;font-size:12px;line-height:12px;color:#5a5a5a;transform:scaleX(0.925);">Move Qty</div>
<div class="t" style="left:1629.00px;top:235.84px;font-size:12px;line-height:12px;color:#5a5a5a;transform:scaleX(0.948);">Location To</div>
<div class="t" style="left:1809.00px;top:235.84px;font-size:12px;line-height:12px;color:#5a5a5a;transform:scaleX(0.943);">Qty in Stock</div>
<div class="r" style="left:1229.5px;top:252px;width:171.5px;height:24px;box-sizing:border-box;border:1px solid #e23b3b;border-radius:3px;background:#f6f6f6;overflow:hidden"><div style="position:absolute;right:-1px;top:-1px;width:0;height:0;border-top:10px solid #e02f2f;border-left:10px solid transparent"></div></div>
<div class="t" style="left:1234.50px;top:258.00px;font-size:13px;line-height:13px;color:#222;transform:scaleX(0.900);">5</div>
<div class="r" style="left:1240px;top:257px;width:1px;height:15px;background:#111;"></div>
<svg class="r" style="left:1386px;top:262px" width="11" height="8" viewBox="0 0 11 8"><path d="M0 0H11L5.5 7Z" fill="#0a5c97"/></svg>
<div class="r" style="left:1409px;top:252px;width:82px;height:24px;background:#f3f3f3;border-radius:2px"></div>
<div class="t" style="left:1414.50px;top:258.00px;font-size:13px;line-height:13px;color:#b0b0b0;transform:scaleX(0.899);">Qty in Stock</div>
<div class="r" style="left:1499.5px;top:252px;width:81.5px;height:24px;box-sizing:border-box;border:1px solid #e23b3b;border-radius:3px;background:#f6f6f6;overflow:hidden"><div style="position:absolute;right:-1px;top:-1px;width:0;height:0;border-top:10px solid #e02f2f;border-left:10px solid transparent"></div></div>
<div class="t" style="left:1505.00px;top:258.00px;font-size:13px;line-height:13px;color:#b0b0b0;transform:scaleX(0.917);">Move Qty</div>
<svg class="r" style="left:1585px;top:255px;" width="20" height="20" viewBox="0 0 24 24"><path fill="#0a5c97" d="M19 6.41L17.59 5 12 10.59 6.41 5 5 6.41 10.59 12 5 17.59 6.41 19 12 13.41 17.59 19 19 17.59 13.41 12z"/></svg>
<div class="r" style="left:1629px;top:252px;width:172px;height:24px;box-sizing:border-box;border:1px solid #e23b3b;border-radius:3px;background:#f6f6f6;overflow:hidden"><div style="position:absolute;right:-1px;top:-1px;width:0;height:0;border-top:10px solid #e02f2f;border-left:10px solid transparent"></div></div>
<div class="t" style="left:1635.00px;top:258.00px;font-size:13px;line-height:13px;color:#b0b0b0;transform:scaleX(0.919);">Select location to</div>
<svg class="r" style="left:1786px;top:262.5px" width="11" height="8" viewBox="0 0 11 8"><path d="M0 0H11L5.5 7Z" fill="#c8c8c8"/></svg>
<div class="r" style="left:1809px;top:252px;width:96px;height:24px;background:#f3f3f3;border-radius:2px"></div>
<div class="t" style="left:1815.00px;top:258.00px;font-size:13px;line-height:13px;color:#b0b0b0;transform:scaleX(0.899);">Qty in Stock</div>
<div class="r" style="left:1229px;top:276px;width:327px;height:240px;box-sizing:border-box;border:1px solid #8ea3b0;background:#fff"></div>
<div class="t" style="left:1243.50px;top:286.00px;font-size:13px;line-height:13px;color:#222;transform:scaleX(0.945);">KH-5</div>
<div class="r" style="left:1543.5px;top:512.5px;width:1.6px;height:1.6px;background:#b4c0c8;"></div>
<div class="r" style="left:1547.5px;top:512.5px;width:1.6px;height:1.6px;background:#b4c0c8;"></div>
<div class="r" style="left:1551.5px;top:512.5px;width:1.6px;height:1.6px;background:#b4c0c8;"></div>
<div class="r" style="left:1547.5px;top:508.5px;width:1.6px;height:1.6px;background:#b4c0c8;"></div>
<div class="r" style="left:1551.5px;top:508.5px;width:1.6px;height:1.6px;background:#b4c0c8;"></div>
<div class="r" style="left:1551.5px;top:504.5px;width:1.6px;height:1.6px;background:#b4c0c8;"></div>
<div class="r" style="left:1752px;top:999px;width:75px;height:25px;background:#ececec;"></div>
<div class="t" style="left:1767.50px;top:1005.92px;font-size:12.5px;line-height:12.5px;color:#0a5c97;transform:scaleX(0.868);">CANCEL</div>
<div class="r" style="left:1837px;top:999px;width:68px;height:25px;background:#c8c8c8;"></div>
<div class="t" style="left:1862.00px;top:1005.92px;font-size:12.5px;line-height:12.5px;color:#f6f6f6;transform:scaleX(0.802);">SAVE</div>
<div class="r" style="left:188px;top:397px;width:948px;height:30px;background:#646464;"></div>
<div class="t" style="left:202.50px;top:406.00px;font-size:13px;line-height:13px;color:#ededed;transform:scaleX(0.916);">Locations</div>
<div class="r" style="left:1008px;top:410.5px;width:9px;height:1.2px;background:#d0d0d0;"></div>
<div class="r" style="left:1058px;top:407px;width:10px;height:10px;border:1.2px solid #e0e0e0;box-sizing:border-box"></div>
<svg class="r" style="left:1109px;top:407px" width="10" height="10" viewBox="0 0 10 10"><path d="M0.5 0.5L9.5 9.5M9.5 0.5L0.5 9.5" stroke="#e8e8e8" stroke-width="1.1"/></svg>
<div class="r" style="left:188px;top:427px;width:176px;height:598px;background:#e6e6e6;"></div>
<div class="r" style="left:364px;top:427px;width:1px;height:598px;background:#5a5a5a;"></div>
<div class="t" style="left:197.50px;top:438.07px;font-size:13.5px;line-height:13.5px;color:#111;font-weight:bold;transform:scaleX(0.913);">Filters</div>
<svg class="r" style="left:311.5px;top:435.5px;transform:rotate(90deg)" width="17" height="17" viewBox="0 0 24 24"><path fill="#0a5c97" d="M12 4V1L8 5l4 4V6c3.31 0 6 2.69 6 6 0 1.01-.25 1.97-.7 2.8l1.46 1.46A7.93 7.93 0 0 0 20 12c0-4.42-3.58-8-8-8zm0 14c-3.31 0-6-2.69-6-6 0-1.01.25-1.97.7-2.8L5.24 7.74A7.93 7.93 0 0 0 4 12c0 4.42 3.58 8 8 8v3l4-4-4-4v3z"/></svg>
<svg class="r" style="left:337.50px;top:435.80px" width="16.4" height="16.4" viewBox="0 0 16.4 16.4"><circle cx="8.2" cy="8.2" r="7.2" fill="#0a5c97"/><path d="M5.3999999999999995 5.3999999999999995L11.0 11.0M11.0 5.3999999999999995L5.3999999999999995 11.0" stroke="#fff" stroke-width="1.3"/></svg>
<div class="r" style="left:188px;top:462px;width:176px;height:1px;background:#cfcfcf;"></div>
<div class="t" style="left:197.00px;top:469.11px;font-size:10.5px;line-height:10.5px;color:#5a5a5a;transform:scaleX(0.970);">Name:</div>
<div class="r" style="left:197px;top:483px;width:158px;height:23px;background:#fff;border-radius:2px"></div>
<div class="t" style="left:202.00px;top:489.69px;font-size:11px;line-height:11px;color:#a5a5a5;transform:scaleX(0.950);">Enter name</div>
<div class="r" style="left:365px;top:427px;width:771px;height:598px;background:#fff;"></div>
<div class="t" style="left:375.60px;top:440.69px;font-size:11px;line-height:11px;color:#0a5c97;font-weight:bold;">AMAZON</div>
<div class="t" style="left:441.20px;top:440.69px;font-size:11px;line-height:11px;color:#0a5c97;font-weight:bold;transform:scaleX(0.898);">IQOS STORE</div>
<div class="t" style="left:520.50px;top:440.69px;font-size:11px;line-height:11px;color:#0a5c97;font-weight:bold;transform:scaleX(0.853);">KATESTORE</div>
<div class="t" style="left:595.60px;top:439.69px;font-size:11px;line-height:11px;color:#0a5c97;font-weight:bold;transform:scaleX(0.930);">KHARKIV</div>
<div class="t" style="left:660.40px;top:440.69px;font-size:11px;line-height:11px;color:#0a5c97;font-weight:bold;transform:scaleX(0.880);">KIEV</div>
<div class="t" style="left:700.80px;top:440.69px;font-size:11px;line-height:11px;color:#0a5c97;font-weight:bold;transform:scaleX(0.883);">KTEST-STORE</div>
<div class="t" style="left:786.20px;top:440.69px;font-size:11px;line-height:11px;color:#0a5c97;font-weight:bold;transform:scaleX(0.947);">NEW VENDOR</div>
<div class="t" style="left:875.80px;top:440.69px;font-size:11px;line-height:11px;color:#0a5c97;font-weight:bold;transform:scaleX(0.853);">NJ</div>
<div class="t" style="left:906.20px;top:440.69px;font-size:11px;line-height:11px;color:#0a5c97;font-weight:bold;transform:scaleX(0.897);">SPRING VALLEY</div>
<div class="t" style="left:1005.50px;top:440.69px;font-size:11px;line-height:11px;color:#0a5c97;font-weight:bold;transform:scaleX(0.874);">STORE1</div>
<div class="r" style="left:365px;top:461px;width:771px;height:1px;background:#e3e3e3;"></div>
<div class="r" style="left:587px;top:458px;width:64px;height:3px;background:#0a5c97;"></div>
<div class="r" style="left:374px;top:468px;width:73px;height:23px;background:#0a5c97;border-radius:2px"></div>
<div class="t" style="left:387.50px;top:474.69px;font-size:11px;line-height:11px;color:#fff;transform:scaleX(0.895);">ADD NEW</div>
<div class="r" style="left:986px;top:468px;width:67px;height:23px;background:#cccccc;border-radius:2px"></div>
<div class="t" style="left:1002.00px;top:474.69px;font-size:11px;line-height:11px;color:#f2f2f2;transform:scaleX(0.783);">DELETE</div>
<div class="r" style="left:1062px;top:468px;width:66px;height:23px;background:#cccccc;border-radius:2px"></div>
<div class="t" style="left:1081.00px;top:474.69px;font-size:11px;line-height:11px;color:#f2f2f2;transform:scaleX(0.864);">PRINT</div>
<div class="r" style="left:365px;top:498px;width:771px;height:1px;background:#e3e3e3;"></div>
<div class="r" style="left:365px;top:525px;width:771px;height:1px;background:#e3e3e3;"></div>
<div class="r" style="left:391.5px;top:499px;width:1px;height:230px;background:#e8e8e8;"></div>
<div class="r" style="left:738.5px;top:499px;width:1px;height:230px;background:#e8e8e8;"></div>
<div class="r" style="left:870.5px;top:499px;width:1px;height:230px;background:#e8e8e8;"></div>
<div class="r" style="left:1003px;top:499px;width:1px;height:230px;background:#e8e8e8;"></div>
<div class="r" style="left:371.5px;top:504px;width:15.5px;height:15.5px;border:2px solid #0b5c98;border-radius:3px;box-sizing:border-box"></div>
<div class="t" style="left:397.00px;top:506.69px;font-size:11px;line-height:11px;color:#222;transform:scaleX(0.954);">Name</div>
<div class="t" style="left:743.00px;top:506.69px;font-size:11px;line-height:11px;color:#222;transform:scaleX(0.952);">Location Type</div>
<div class="t" style="left:876.00px;top:506.69px;font-size:11px;line-height:11px;color:#222;transform:scaleX(0.932);">Default Receive Location</div>
<div class="t" style="left:1008.50px;top:506.69px;font-size:11px;line-height:11px;color:#222;transform:scaleX(0.958);">Default Pick Location</div>
<div class="r" style="left:365px;top:526.0px;width:771px;height:22.5px;background:#ebf2f6;"></div>
<div class="r" style="left:371.5px;top:529.5px;width:15.5px;height:15.5px;border:2px solid #0b5c98;border-radius:3px;box-sizing:border-box"></div>
<div class="t" style="left:397.00px;top:532.19px;font-size:11px;line-height:11px;color:#2c3a4b;transform:scaleX(0.938);">KH-1</div>
<div class="t" style="left:743.00px;top:532.19px;font-size:11px;line-height:11px;color:#2c3a4b;transform:scaleX(0.921);">Storage</div>
<div class="r" style="left:371.5px;top:552.0px;width:15.5px;height:15.5px;border:2px solid #0b5c98;border-radius:3px;box-sizing:border-box"></div>
<div class="t" style="left:397.00px;top:554.69px;font-size:11px;line-height:11px;color:#2c3a4b;transform:scaleX(0.938);">KH-2</div>
<div class="t" style="left:743.00px;top:554.69px;font-size:11px;line-height:11px;color:#2c3a4b;transform:scaleX(0.921);">Storage</div>
<div class="r" style="left:365px;top:571.0px;width:771px;height:22.5px;background:#ebf2f6;"></div>
<div class="r" style="left:371.5px;top:574.5px;width:15.5px;height:15.5px;border:2px solid #0b5c98;border-radius:3px;box-sizing:border-box"></div>
<div class="t" style="left:397.00px;top:577.19px;font-size:11px;line-height:11px;color:#2c3a4b;transform:scaleX(0.938);">KH-3</div>
<div class="t" style="left:743.00px;top:577.19px;font-size:11px;line-height:11px;color:#2c3a4b;transform:scaleX(0.921);">Storage</div>
<div class="r" style="left:371.5px;top:597.0px;width:15.5px;height:15.5px;border:2px solid #0b5c98;border-radius:3px;box-sizing:border-box"></div>
<div class="t" style="left:397.00px;top:599.69px;font-size:11px;line-height:11px;color:#2c3a4b;transform:scaleX(0.938);">KH-4</div>
<div class="t" style="left:743.00px;top:599.69px;font-size:11px;line-height:11px;color:#2c3a4b;transform:scaleX(0.921);">Storage</div>
<div class="r" style="left:365px;top:616.0px;width:771px;height:22.5px;background:#ebf2f6;"></div>
<div class="r" style="left:371.5px;top:619.5px;width:15.5px;height:15.5px;border:2px solid #0b5c98;border-radius:3px;box-sizing:border-box"></div>
<div class="t" style="left:397.00px;top:622.19px;font-size:11px;line-height:11px;color:#2c3a4b;transform:scaleX(0.938);">KH-5</div>
<div class="t" style="left:743.00px;top:622.19px;font-size:11px;line-height:11px;color:#2c3a4b;transform:scaleX(0.921);">Storage</div>
<div class="r" style="left:371.5px;top:642.0px;width:15.5px;height:15.5px;border:2px solid #0b5c98;border-radius:3px;box-sizing:border-box"></div>
<div class="t" style="left:397.00px;top:644.69px;font-size:11px;line-height:11px;color:#2c3a4b;transform:scaleX(0.938);">KH-6</div>
<div class="t" style="left:743.00px;top:644.69px;font-size:11px;line-height:11px;color:#2c3a4b;transform:scaleX(0.921);">Storage</div>
<div class="r" style="left:365px;top:661.0px;width:771px;height:22.5px;background:#ebf2f6;"></div>
<div class="r" style="left:371.5px;top:664.5px;width:15.5px;height:15.5px;border:2px solid #0b5c98;border-radius:3px;box-sizing:border-box"></div>
<div class="t" style="left:397.00px;top:667.19px;font-size:11px;line-height:11px;color:#2c3a4b;transform:scaleX(0.938);">KH-7</div>
<div class="t" style="left:743.00px;top:667.19px;font-size:11px;line-height:11px;color:#2c3a4b;transform:scaleX(0.921);">Storage</div>
<div class="r" style="left:371.5px;top:687.0px;width:15.5px;height:15.5px;border:2px solid #0b5c98;border-radius:3px;box-sizing:border-box"></div>
<div class="t" style="left:397.00px;top:689.69px;font-size:11px;line-height:11px;color:#2c3a4b;transform:scaleX(0.938);">KH-8</div>
<div class="t" style="left:743.00px;top:689.69px;font-size:11px;line-height:11px;color:#2c3a4b;transform:scaleX(0.921);">Storage</div>
<div class="r" style="left:365px;top:706.0px;width:771px;height:22.5px;background:#ebf2f6;"></div>
<div class="r" style="left:371.5px;top:709.5px;width:15.5px;height:15.5px;border:2px solid #0b5c98;border-radius:3px;box-sizing:border-box"></div>
<div class="t" style="left:397.00px;top:712.19px;font-size:11px;line-height:11px;color:#2c3a4b;transform:scaleX(0.938);">KH-9</div>
<div class="t" style="left:743.00px;top:712.19px;font-size:11px;line-height:11px;color:#2c3a4b;transform:scaleX(0.921);">Storage</div>
<div class="r" style="left:391.5px;top:526px;width:1px;height:203px;background:#e4e8eb;"></div>
<div class="r" style="left:738.5px;top:526px;width:1px;height:203px;background:#e4e8eb;"></div>
<div class="r" style="left:870.5px;top:526px;width:1px;height:203px;background:#e4e8eb;"></div>
<div class="r" style="left:1003px;top:526px;width:1px;height:203px;background:#e4e8eb;"></div>
<div class="r" style="left:362px;top:525px;width:99px;height:205px;box-sizing:border-box;border:4px solid #fd5745;box-shadow:2px 2px 3px rgba(0,0,0,.75), inset 2px 2px 3px rgba(0,0,0,.75)"></div>
<div class="r" style="left:1205px;top:216px;width:415px;height:350px;box-sizing:border-box;border:4px solid #fd5745;box-shadow:2px 2px 3px rgba(0,0,0,.75), inset 2px 2px 3px rgba(0,0,0,.75)"></div>
</body></html>
